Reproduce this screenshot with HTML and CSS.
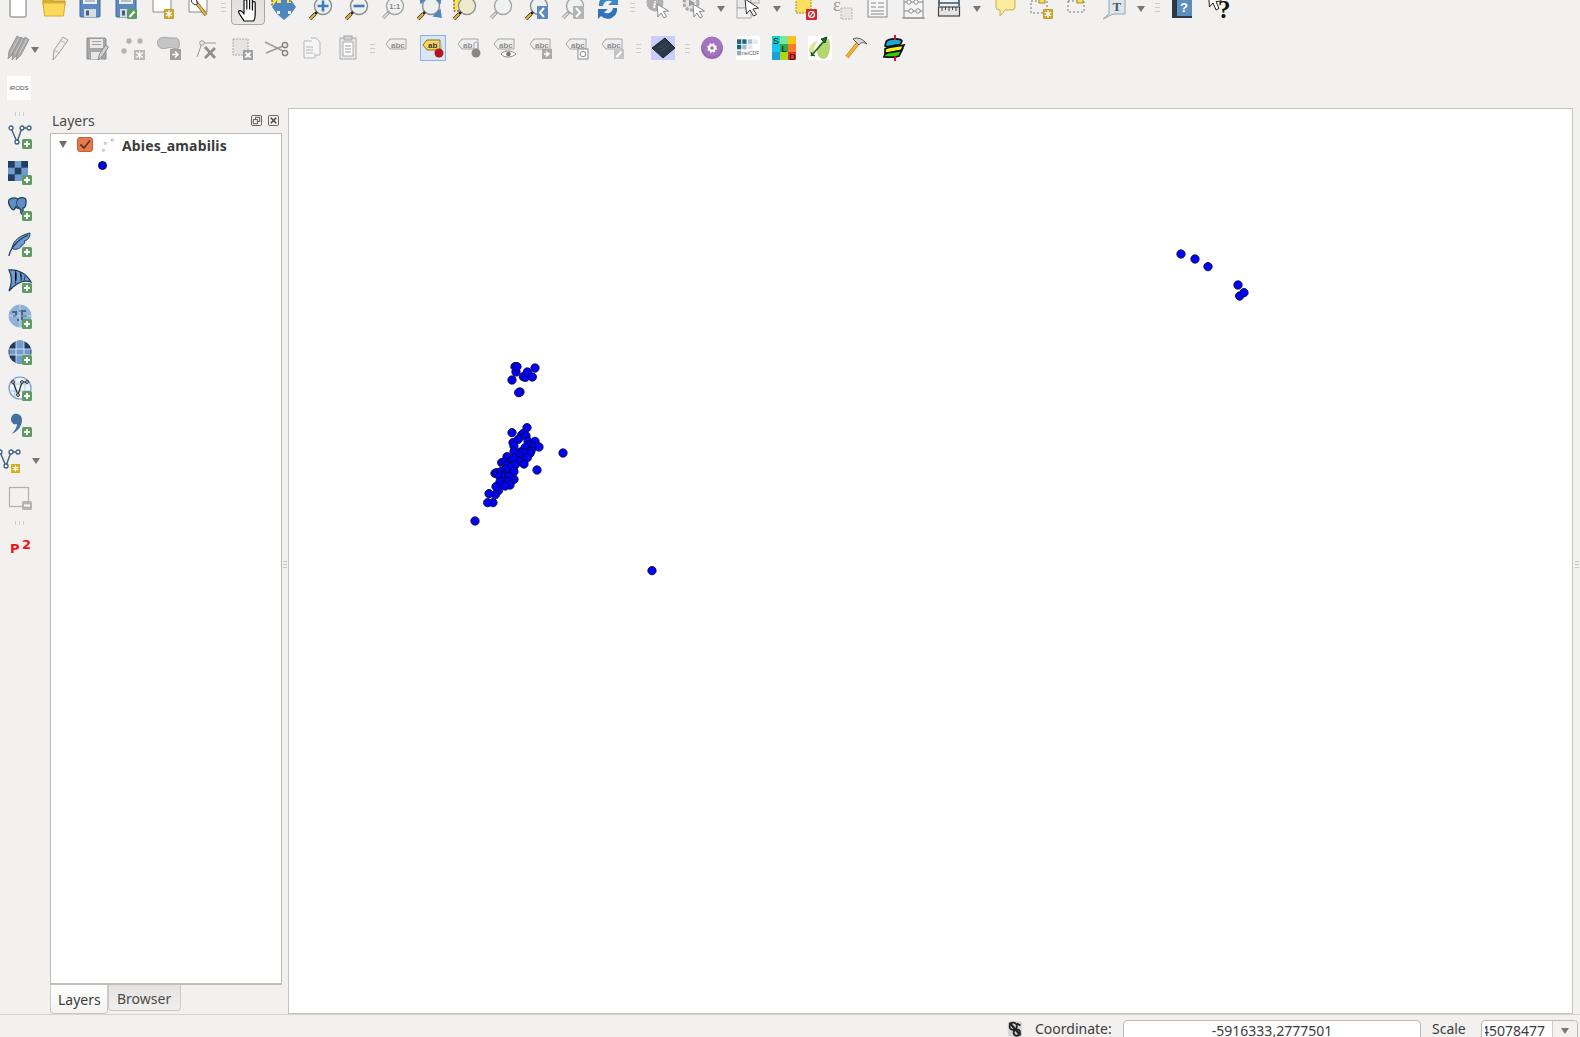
FILE: index.html
```html
<!DOCTYPE html>
<html lang="en">
<head>
<meta charset="utf-8">
<title>QGIS</title>
<link rel="stylesheet" href="styles.css">
</head>
<body>
<svg class="defs" aria-hidden="true">
  <defs>
    <g id="mag"><circle cx="15" cy="11" r="8.500" fill="#eef0f0" stroke="#8b8f8f" stroke-width="1.400"/><path d="M9 17l-2 2" stroke="#222" stroke-width="2.600"/><path d="M7 19l-5 5" stroke="#333" stroke-width="3.600"/><path d="M7 19l-5 5" stroke="#f3b32a" stroke-width="2.200"/></g>
    <g id="magg"><circle cx="15" cy="11" r="8.500" fill="#f0f1f1" stroke="#a5a8a8" stroke-width="1.400"/><path d="M9 17l-6 6" stroke="#a0a0a0" stroke-width="3.200"/><path d="M8 18l-5 5" stroke="#e3e3e3" stroke-width="1.400"/></g>
    <g id="floppy"><path d="M2 1h18l2 2v18a1 1 0 0 1-1 1H3a1 1 0 0 1-1-1z" fill="#5a8abf" stroke="#40699a"/><rect x="5" y="-4" width="14" height="13" fill="#eef1f4"/><path d="M7 0h10M7 3h10M7 6h10" stroke="#7d8b99"/><rect x="6" y="14" width="12" height="8" fill="#d8dde2"/><rect x="8" y="15.500" width="3" height="5" fill="#44607f"/></g>
    <g id="floppyg"><path d="M3 2h18l1 1v20H3z" fill="#a6a6a6" stroke="#8e8e8e"/><rect x="6" y="3" width="13" height="9" fill="#e8e8e8"/><path d="M8 5.500h9M8 8.500h9" stroke="#a0a0a0"/><rect x="7" y="16" width="10" height="7" fill="#e6e6e6"/></g>
    <g id="plus"><rect x="14" y="14" width="10" height="10" rx="1.500" fill="#5f9c5f"/><path d="M19 16v6M16 19h6" stroke="#fff" stroke-width="2"/></g>
    <g id="page"><path d="M3-8h13l5 5v20H3z" fill="#fff" stroke="#8a8a8a"/></g>
    <g id="gold"><rect x="14" y="14" width="10" height="10" rx="1" fill="#c9a227"/><path d="M19 15.500v7M15.800 17l6.400 4M22.200 17l-6.400 4" stroke="#fff" stroke-width="1.400"/></g>
    <g id="abc"><path d="M5 3h16v10H5L1 8z" fill="#efefef" stroke="#a4a4a4"/><text x="6" y="11.500" class="t-abc">abc</text></g>
    <g id="badge-arrow"><rect x="13" y="13" width="10" height="10" fill="#a9a9a9"/><path d="M15 18h4M17 15.500l3 2.500-3 2.500" stroke="#fff" stroke-width="1.500" fill="none"/></g>
    <g id="globe"><circle cx="12" cy="11" r="11" fill="#8fb2d8" stroke="#8ab0db"/></g>
    <g id="cursor"><path d="M12 9l1 13 3-4 3 5 2.500-1.500-3-5 5-.5z" fill="#fff" stroke="#888"/></g>
    <g id="pen3"><path d="M2 23l1-8L11 0l4 2.500L7 18z" fill="#a8a8a8" stroke="#8f8f8f" stroke-width=".8"/></g>
  </defs>
</svg>

<div class="app">
  <header class="toolbars">
    <div class="tb tb-first">
      <span class="b"><svg class="i" viewBox="0 0 24 24"><path d="M4-6h11l5 5v22a1 1 0 0 1-1 1H5a1 1 0 0 1-1-1z" fill="#fff" stroke="#777"/><path d="M15-6v5h5" fill="#ddd" stroke="#777"/></svg></span>
      <span class="b"><svg class="i" viewBox="0 0 24 24"><path d="M1 3h8l2 3h12v4H1z" fill="#d9af2f" stroke="#c29a22"/><path d="M1 8h22l-1.500 13H2.500z" fill="#fcd95a" stroke="#d5ae33"/></svg></span>
      <span class="b"><svg class="i" viewBox="0 0 24 24"><use href="#floppy"/></svg></span>
      <span class="b"><svg class="i" viewBox="0 0 24 24"><use href="#floppy"/><rect x="13" y="14" width="10" height="10" rx="1" fill="#5f9c5f"/><path d="M15.500 22l5-5.500" stroke="#fff" stroke-width="2"/></svg></span>
      <span class="b"><svg class="i" viewBox="0 0 24 24"><use href="#page"/><use href="#gold"/></svg></span>
      <span class="b"><svg class="i" viewBox="0 0 24 24"><use href="#page"/><path d="M9 6l11 14" stroke="#444" stroke-width="3.400"/><path d="M11 8.500l9 11.500" stroke="#eeb92f" stroke-width="2.200"/><path d="M5.500 5a4 4 0 0 0 6 4l-1-4-2-2z" fill="#fff" stroke="#333"/></svg></span>
      <span class="sep"></span>
      <span class="b b-on"><svg class="i" viewBox="0 -5 24 24"><path d="M8 21C6 17 2 13 2.500 11.500 3.500 9.500 6 11 8 14V1a1.400 1.400 0 0 1 2.800 0v8-11a1.400 1.400 0 0 1 2.800 0V9-1a1.400 1.400 0 0 1 2.800 0v11-7a1.400 1.400 0 0 1 2.800 0v12c0 3-.5 4-1.500 6z" fill="#fff" stroke="#111" stroke-width="1.200" stroke-linejoin="round"/></svg></span>
      <span class="b"><svg class="i" viewBox="0 0 24 24"><rect x="0" y="-5" width="18" height="16" fill="#ffe34d" stroke="#333" stroke-dasharray="2 1.500"/><path d="M12 8h-7v-3l-5 7 5 7v-3h14v3l5-7-5-7v3zM12 18v-14" fill="#4f86bf"/><path d="M8 16h8v3h3l-7 6-7-6h3zM9 8V4H6l6-7 6 7h-3v4z" fill="#4f86bf"/></svg></span>
      <span class="b"><svg class="i" viewBox="0 0 24 24"><use href="#mag"/><path d="M15 5.500v11M9.500 11h11" stroke="#3f7db8" stroke-width="2.600"/></svg></span>
      <span class="b"><svg class="i" viewBox="0 0 24 24"><use href="#mag"/><path d="M9.500 11h11" stroke="#3f7db8" stroke-width="2.600"/></svg></span>
      <span class="b"><svg class="i" viewBox="0 0 24 24"><use href="#magg"/><text x="9.300" y="14" class="t-11">1:1</text></svg></span>
      <span class="b"><svg class="i" viewBox="0 0 24 24"><use href="#mag"/><path d="M4 1l7 1-6 6zM25 1l-7 1 6 6zM25 22l-7-1 6-6zM10 2l-5 5M19 2l5 5M19 21l5-5" fill="#4f86bf" stroke="#4f86bf" stroke-width="1.500"/></svg></span>
      <span class="b"><svg class="i" viewBox="0 0 24 24"><path d="M2-5h13v21H2z" fill="#ffe34d" stroke="#333" stroke-dasharray="2 1.500"/><use href="#mag"/><circle cx="15" cy="11" r="7.500" fill="#ece9cc"/></svg></span>
      <span class="b"><svg class="i" viewBox="0 0 24 24"><use href="#magg"/></svg></span>
      <span class="b"><svg class="i" viewBox="0 0 24 24"><use href="#mag"/><rect x="13" y="11" width="11" height="13" fill="#5a8abf"/><path d="M20 13l-4 4.500 4 4.500" stroke="#fff" stroke-width="2" fill="none"/></svg></span>
      <span class="b"><svg class="i" viewBox="0 0 24 24"><use href="#magg"/><rect x="13" y="11" width="11" height="13" fill="#b4b4b4"/><path d="M16 13l4 4.500-4 4.500" stroke="#fff" stroke-width="2" fill="none"/></svg></span>
      <span class="b"><svg class="i" viewBox="0 0 24 24"><path d="M3 11A9.500 9.500 0 0 1 19 3l3-3v10h-10l4-3.500A6 6 0 0 0 7 11z" fill="#3f86c8"/><path d="M21 13A9.500 9.500 0 0 1 5 21l-3 3V14h10l-4 3.500A6 6 0 0 0 17 13z" fill="#2f74b8"/></svg></span>
      <span class="sep sep-n"></span>
      <span class="b"><svg class="i" viewBox="0 0 24 24"><circle cx="10" cy="8" r="8.500" fill="#b0b0b0"/><text x="8" y="13" class="t-info">i</text><use href="#cursor"/></svg></span>
      <span class="b"><svg class="i" viewBox="0 0 24 24"><circle cx="10" cy="8" r="7" fill="#e6e6e6" stroke="#a8a8a8" stroke-width="3" stroke-dasharray="3 1.500"/><path d="M8 4.500l6 3.500-6 3.500z" fill="#9a9a9a"/><use href="#cursor"/></svg></span>
      <span class="dd"></span>
      <span class="b"><svg class="i" viewBox="0 0 24 24"><rect x="0" y="-4" width="14" height="17" fill="#e8e8e8" stroke="#aaa"/><rect x="14" y="-4" width="8" height="12" fill="#e8e8e8" stroke="#aaa"/><rect x="0" y="13" width="14" height="10" fill="#f0f0f0" stroke="#aaa"/><path d="M8 4l1.500 15 3.500-4 3.500 6 3-1.500-3.500-5.500 5.500-1z" fill="#fff" stroke="#333"/></svg></span>
      <span class="dd"></span>
      <span class="b"><svg class="i" viewBox="0 0 24 24"><rect x="3" y="-5" width="15" height="23" fill="#fae05e" stroke="#a58a2c" stroke-dasharray="2 1"/><rect x="13" y="14" width="11" height="11" rx="1" fill="#d5232f"/><circle cx="18.500" cy="19.500" r="3" fill="none" stroke="#fff" stroke-width="1.200"/><path d="M16.500 22l4-5" stroke="#fff" stroke-width="1.200"/></svg></span>
      <span class="b"><svg class="i" viewBox="0 0 24 24"><text x="4" y="16" class="t-eps">ε</text><rect x="12" y="13" width="11" height="11" fill="#e6e6e6" stroke="#b5b5b5" stroke-dasharray="2 1"/></svg></span>
      <span class="b"><svg class="i" viewBox="0 0 24 24"><rect x="3" y="-4" width="19" height="26" fill="#f5f5f5" stroke="#8a8a8a"/><rect x="3" y="-4" width="19" height="8" fill="#8e8e8e"/><path d="M6 8h5M13 8h6M6 12h5M13 12h6M6 16h13M6 19h13" stroke="#8a8a8a" stroke-width="1.200"/></svg></span>
      <span class="b"><svg class="i" viewBox="0 0 24 24"><rect x="3" y="-4" width="19" height="27" fill="#f5f5f5" stroke="#8a8a8a"/><path d="M3 7h19M3 16h19M1 23h23" stroke="#8a8a8a" stroke-width="1.200"/><circle cx="8" cy="7" r="2.200" fill="#fff" stroke="#888"/><circle cx="15" cy="7" r="2.200" fill="#fff" stroke="#888"/><circle cx="10" cy="16" r="2.200" fill="#fff" stroke="#888"/><circle cx="17" cy="16" r="2.200" fill="#fff" stroke="#888"/></svg></span>
      <span class="b"><svg class="i" viewBox="0 0 24 24"><path d="M2 8h20M2 5v6M22 5v6" stroke="#34566f" stroke-width="1.600"/><rect x="1.500" y="12" width="21" height="9" fill="#e4e4e4" stroke="#444" stroke-width="1.200"/><path d="M5 12v4M8.500 12v3M12 12v4M15.500 12v3M19 12v4" stroke="#444"/></svg></span>
      <span class="dd"></span>
      <span class="b"><svg class="i" viewBox="0 0 24 24"><path d="M5-4h15a2 2 0 0 1 2 2v14a3 3 0 0 1-3 3H12l-5 6v-6H6a3 3 0 0 1-3-3V-2a2 2 0 0 1 2-2z" fill="#fbeb9d" stroke="#c9b03f"/></svg></span>
      <span class="b"><svg class="i" viewBox="0 0 24 24"><rect x="2" y="6" width="16" height="12" fill="none" stroke="#777" stroke-dasharray="2 2"/><rect x="10" y="3" width="6" height="5" fill="#fadf4c" stroke="#a58a2c"/><use href="#gold"/></svg></span>
      <span class="b"><svg class="i" viewBox="0 0 24 24"><rect x="3" y="6" width="16" height="11" fill="none" stroke="#777" stroke-dasharray="2 2"/><rect x="12" y="3" width="6" height="5" fill="#fadf4c" stroke="#a58a2c"/></svg></span>
      <span class="b"><svg class="i" viewBox="0 0 24 24"><path d="M8-4h16v23H12l-10 5 6-5z" fill="#dde7f0" stroke="#9aa3ab"/><text x="11.500" y="16" class="t-serif">T</text></svg></span>
      <span class="dd"></span>
      <span class="sep sep-n"></span>
      <span class="b"><svg class="i" viewBox="0 0 24 24"><rect x="2" y="-6" width="20" height="29" rx="1" fill="#5f8dbe"/><rect x="2" y="-6" width="5" height="29" fill="#2c3845"/><rect x="2" y="21" width="20" height="2" fill="#2c3845"/><text x="10" y="17" class="t-q">?</text></svg></span>
      <span class="b"><svg class="i" viewBox="0 0 24 24"><path d="M2-6l1.500 18 3.500-4 3 7 3-1.500-3-7 5.500-.5z" fill="#fff" stroke="#222"/><text x="12" y="23" class="t-what">?</text></svg></span>
    </div>

    <div class="tb">
      <span class="b b-narrow"><svg class="i" viewBox="0 0 24 24"><use href="#pen3"/><use href="#pen3" x="4" y="1"/><use href="#pen3" x="8" y="1"/><path d="M5 17L13 2M9 18l8-15M13 18l8-15" stroke="#d5d5d5" stroke-width=".8"/></svg></span>
      <span class="dd dd-small"></span>
      <span class="b"><svg class="i" viewBox="0 0 24 24"><path d="M5 24l1-10L15 1l5 3-9 13z" fill="#ececec" stroke="#a0a0a0"/><path d="M6 14l5 3M12 4l5 3" stroke="#b5b5b5"/></svg></span>
      <span class="b"><svg class="i" viewBox="0 0 24 24"><use href="#floppyg"/><path d="M14 24l1.500-6 6-9 3 2-6 9z" fill="#d0d0d0" stroke="#8a8a8a"/></svg></span>
      <span class="b"><svg class="i" viewBox="0 0 24 24"><circle cx="9" cy="5" r="2.700" fill="#b4b4b4"/><circle cx="20" cy="5" r="2.700" fill="#b4b4b4"/><circle cx="4" cy="15" r="2.700" fill="#b4b4b4"/><rect x="14" y="14" width="11" height="10" fill="#b8b8b8"/><path d="M19.500 15.500v7M16 16.500l7 5M23 16.500l-7 5" stroke="#fff" stroke-width="1.300"/></svg></span>
      <span class="b"><svg class="i" viewBox="0 0 24 24"><path d="M3 3c3-3 9-1 12-1s7-1 8 3 0 9-3 8-6-2-9-1-8 1-9-3-.5-4 1-6z" fill="#c4c4c4" stroke="#a5a5a5"/><rect x="14" y="13" width="11" height="11" fill="#a0a0a0"/><path d="M16 18.500h5M19 15.500l3 3-3 3" stroke="#fff" stroke-width="1.600" fill="none"/></svg></span>
      <span class="b"><svg class="i" viewBox="0 0 24 24"><path d="M5 21L10 7h14" stroke="#999" fill="none"/><circle cx="10" cy="7" r="2.300" fill="#eee" stroke="#999"/><path d="M13 11l10 11M23 12L13 22" stroke="#8f8f8f" stroke-width="2.800"/></svg></span>
      <span class="b"><svg class="i" viewBox="0 0 24 24"><rect x="5" y="3" width="15" height="16" fill="#e4e4e4" stroke="#aaa" stroke-dasharray="2 1"/><rect x="15" y="14" width="10" height="10" fill="#a0a0a0"/><path d="M17.500 16.500l5 5M22.500 16.500l-5 5" stroke="#fff" stroke-width="1.800"/></svg></span>
      <span class="b"><svg class="i" viewBox="0 0 24 24"><path d="M1 6l18 9M2 17l17-7" stroke="#9e9e9e" stroke-width="1.500"/><circle cx="21" cy="9" r="2.600" fill="none" stroke="#888" stroke-width="1.500"/><circle cx="21" cy="17" r="2.600" fill="none" stroke="#888" stroke-width="1.500"/></svg></span>
      <span class="b"><svg class="i" viewBox="0 0 24 24"><path d="M4 5h8l3 3v14H4z" fill="#f5f5f5" stroke="#b5b5b5"/><path d="M11 2h5l4 4v13h-5" fill="#f5f5f5" stroke="#b5b5b5"/><path d="M6 11h7M6 14h7M6 17h7" stroke="#b5b5b5"/></svg></span>
      <span class="b"><svg class="i" viewBox="0 0 24 24"><rect x="4" y="2" width="16" height="21" fill="#e8e8e8" stroke="#aaa"/><rect x="8" y="0" width="8" height="4" fill="#d0d0d0" stroke="#aaa"/><rect x="7" y="6" width="10" height="14" fill="#fff" stroke="#aaa"/><path d="M9 10h6M9 13h6M9 16h6" stroke="#999"/></svg></span>
      <span class="sep sep-n"></span>
      <span class="b"><svg class="i" viewBox="0 0 24 24"><use href="#abc"/></svg></span>
      <span class="b b-sel"><svg class="i" viewBox="0 0 24 24"><path d="M6 4h13v10H6L2 9z" fill="#f7d75a" stroke="#8a7320"/><text x="7" y="12" class="t-ab">ab</text><path d="M16 8a2 2 0 0 1 4 0v5" fill="none" stroke="#bbb" stroke-width="1.200"/><circle cx="18" cy="17" r="4.500" fill="#b3161f"/></svg></span>
      <span class="b"><svg class="i" viewBox="0 0 24 24"><path d="M5 3h16v10H5L1 8z" fill="#efefef" stroke="#a4a4a4"/><text x="6" y="11.500" class="t-abc">ab</text><circle cx="19" cy="17" r="4.500" fill="#888"/><path d="M17 13V8a2 2 0 0 1 4 0v5" stroke="#aaa" fill="none"/></svg></span>
      <span class="b"><svg class="i" viewBox="0 0 24 24"><use href="#abc"/><path d="M8 18c3-4 11-4 15 0-4 4-12 4-15 0z" fill="#fff" stroke="#888"/><circle cx="15.500" cy="18" r="2.300" fill="#777"/></svg></span>
      <span class="b"><svg class="i" viewBox="0 0 24 24"><use href="#abc"/><use href="#badge-arrow"/></svg></span>
      <span class="b"><svg class="i" viewBox="0 0 24 24"><use href="#abc"/><rect x="13" y="13" width="10" height="10" fill="#fff" stroke="#888"/><circle cx="18" cy="18" r="2.800" fill="none" stroke="#888"/></svg></span>
      <span class="b"><svg class="i" viewBox="0 0 24 24"><use href="#abc"/><rect x="13" y="13" width="10" height="10" fill="#c4c4c4"/><path d="M15.500 21l5-5.500" stroke="#fff" stroke-width="2"/></svg></span>
      <span class="sep"></span>
      <span class="b"><svg class="i lav" viewBox="0 0 24 24"><path d="M1 12L14 2l10 10-12 10z" fill="#2b3845" stroke="#1e2833"/><path d="M8 12l6-4M10 15l6-4" stroke="#44566a" stroke-width=".8"/></svg></span>
      <span class="sep sep-n"></span>
      <span class="b"><svg class="i" viewBox="0 0 24 24"><circle cx="12" cy="12" r="11" fill="#9b63b3"/><circle cx="12" cy="10.500" r="10" fill="#a574be"/><circle cx="12" cy="12" r="3.800" fill="#fff" stroke="#fff" stroke-width="2" stroke-dasharray="1.800 1.200"/><circle cx="12" cy="12" r="1.700" fill="#9b63b3"/></svg></span>
      <span class="b"><svg class="i tile" viewBox="0 0 24 24"><rect x="1" y="3.300" width="4.300" height="4.600" fill="#2c5f80"/><rect x="6.300" y="3.300" width="4.300" height="4.600" fill="#0f6a8a"/><rect x="12" y="3.300" width="4.300" height="4.600" fill="#adbfcc"/><rect x="17.500" y="3.300" width="4.300" height="4.600" fill="#e5e8ea"/><rect x="1" y="8.700" width="4.300" height="4.600" fill="#0f6a8a"/><rect x="6.300" y="8.700" width="4.300" height="4.600" fill="#a7bac8"/><rect x="12" y="8.700" width="4.300" height="4.600" fill="#e0e5e9"/><rect x="1" y="14.700" width="4.300" height="4.600" fill="#93a8b8"/><text x="6" y="18.500" class="t-nc">netCDF</text></svg></span>
      <span class="b"><svg class="i" viewBox="0 0 24 24"><rect width="8" height="8" fill="#14d0d0"/><rect x="8" width="8" height="8" fill="#75e89a"/><rect x="16" width="8" height="8" fill="#ffc21a"/><rect y="8" width="8" height="8" fill="#18c4ef"/><rect x="8" y="8" width="8" height="8" fill="#32a848"/><rect x="16" y="8" width="8" height="8" fill="#fb7b27"/><rect y="16" width="8" height="8" fill="#1f9fd6"/><rect x="8" y="16" width="8" height="8" fill="#a9d61e"/><rect x="16" y="16" width="8" height="8" fill="#e5342d"/><text x="1" y="7.500" class="t-sld">S</text><text x="9.500" y="15.500" class="t-sld">L</text><text x="17" y="23.500" class="t-sld">D</text></svg></span>
      <span class="b"><svg class="i tile" viewBox="0 0 24 24"><path d="M1 14c0-5 5-9 9-9-3 4-5 9-3 15-3 1-6-2-6-6z" fill="#dde79a"/><path d="M9 15C9 9 14 4 21 3c2 8 1 18-5 20-4 0-7-3-7-8z" fill="#b5d66f"/><path d="M3 20L18 3" stroke="#1e6b2a" stroke-width="1.800"/><path d="M19 1l-6 2 4 4zM3 16l1 3 3 1" fill="#1e6b2a" stroke="#1e3b2a"/></svg></span>
      <span class="b"><svg class="i" viewBox="0 0 24 24"><path d="M3 21L14 7" stroke="#c98a1f" stroke-width="3.800"/><path d="M3 21L14 7" stroke="#f2b63c" stroke-width="2.200"/><path d="M9 3c4-2 9-1 14 5-4-2-6-2-8 1l-3-3z" fill="#d8d8d8" stroke="#555"/></svg></span>
      <span class="b"><svg class="i" viewBox="0 0 24 24"><path d="M15-1v26" stroke="#e0102a" stroke-width="1.800"/><path d="M6 6C8 2 21 2 22 5l-2 4C15 8 9 12 5 10z" fill="#19a9d9" stroke="#111" stroke-width="1.700"/><path d="M5 13c5-3 11-2 19-4l-3 6c-4-1-11 3-16 2z" fill="#f5f020" stroke="#111" stroke-width="1.700"/><path d="M5 18c5-3 11-1 17-4l-3 6c-4 2-11 1-15 1z" fill="#28d018" stroke="#111" stroke-width="1.700"/><path d="M15-1v5M15 20v5" stroke="#e0102a" stroke-width="1.800"/></svg></span>
    </div>

    <div class="tb tb-last">
      <span class="irods">iRODS</span>
    </div>
  </header>

  <main class="main">
    <nav class="lt">
      <span class="vgrip"></span>
      <span class="li"><svg class="i" viewBox="0 0 24 24"><path d="M3 3l6 14 5-14h7" fill="none" stroke="#3d6082" stroke-width="1.400"/><circle cx="3" cy="3" r="2" fill="#fff" stroke="#3d6082" stroke-width="1.300"/><circle cx="9" cy="17" r="2" fill="#fff" stroke="#3d6082" stroke-width="1.300"/><circle cx="14" cy="3" r="2" fill="#fff" stroke="#3d6082" stroke-width="1.300"/><circle cx="21" cy="3" r="2" fill="#fff" stroke="#3d6082" stroke-width="1.300"/><use href="#plus"/></svg></span>
      <span class="li"><svg class="i" viewBox="0 0 24 24"><rect width="20" height="20" fill="#6f9bcf"/><rect width="6.700" height="6.700" fill="#223f60"/><rect x="13.300" width="6.700" height="6.700" fill="#223f60"/><rect x="6.700" y="6.700" width="6.700" height="6.700" fill="#223f60"/><rect y="13.300" width="6.700" height="6.700" fill="#223f60"/><use href="#plus"/></svg></span>
      <span class="li"><svg class="i" viewBox="0 0 24 24"><path d="M1 3C4 0 8 1 10 2c3-2 9-2 8 3 0 3-1 6-3 6v5c-1 2-3 1-2-3l-2-2c-2 1-3-1-3-2-1 4-3 5-5 2S0 5 1 3z" fill="#5f8fc4" stroke="#223f60" stroke-width="1.300"/><path d="M10 2c-2 3-2 6 1 9" stroke="#223f60" fill="none"/><use href="#plus"/></svg></span>
      <span class="li"><svg class="i" viewBox="0 0 24 24"><path d="M4 15C5 8 12 2 22 0c0 6-4 8-6 8 2 1 0 4-2 4-1 3-5 5-9 4z" fill="#6f9bcf" stroke="#223f60"/><path d="M1 23c1-7 8-16 19-21" stroke="#223f60" fill="none" stroke-width="1.300"/><use href="#plus"/></svg></span>
      <span class="li"><svg class="i" viewBox="0 0 24 24"><path d="M1 1c8-1 17 3 22 12-6-2-14 0-22 9 3-7 3-15 0-21z" fill="#6f9bcf" stroke="#223f60" stroke-width="1.300"/><path d="M7 1c2 4 2 8 0 14M12 3c2 3 2 6 1 9M17 7l-1 5" stroke="#223f60"/><use href="#plus"/></svg></span>
      <span class="li"><svg class="i" viewBox="0 0 24 24"><use href="#globe"/><path d="M4 7h5M11 6h7M5 11h3M12 11h7M9 15h2M15 15h3M8 8v3M14 7v8" stroke="#344f6e" stroke-width="1.500"/><path d="M1 11h22M12 0v22" stroke="#dce8f4" stroke-width=".7"/><use href="#plus"/></svg></span>
      <span class="li"><svg class="i" viewBox="0 0 24 24"><circle cx="12" cy="11" r="11.500" fill="#1e3d62"/><path d="M1.500 8h21v6h-21zM8 0h8v22H8z" fill="#6f9bcf"/><path d="M1 8h22M1 14h22M8 0v22M16 0v22" stroke="#e8eef5" stroke-width=".8"/><use href="#plus"/></svg></span>
      <span class="li"><svg class="i" viewBox="0 0 24 24"><circle cx="12" cy="11" r="11" fill="#eef3f9" stroke="#6f9bcf" stroke-width="1.200"/><path d="M1 7h22M1 14h22M7 1v20M17 1v20" stroke="#a5c2e0" stroke-width=".9"/><path d="M5 5l5 13 4-13h5" fill="none" stroke="#222" stroke-width="1.200"/><circle cx="5" cy="5" r="1.400" fill="#fff" stroke="#222"/><circle cx="10" cy="18" r="1.400" fill="#fff" stroke="#222"/><circle cx="14" cy="5" r="1.400" fill="#fff" stroke="#222"/><circle cx="19" cy="5" r="1.400" fill="#fff" stroke="#222"/><use href="#plus"/></svg></span>
      <span class="li"><svg class="i" viewBox="0 0 24 24"><path d="M6 1c4-1 8 1 8 6 0 6-4 11-10 14 2-3 5-6 5-10-3 1-6-1-6-5 0-2 1-4 3-5z" fill="#44709f"/><use href="#plus"/></svg></span>
      <span class="li li-new"><svg class="i" viewBox="0 0 24 24"><path d="M2 3l6 14 5-14h7" fill="none" stroke="#3d6082" stroke-width="1.400"/><circle cx="2" cy="3" r="2" fill="#fff" stroke="#3d6082" stroke-width="1.300"/><circle cx="8" cy="17" r="2" fill="#fff" stroke="#3d6082" stroke-width="1.300"/><circle cx="13" cy="3" r="2" fill="#fff" stroke="#3d6082" stroke-width="1.300"/><circle cx="20" cy="3" r="2" fill="#fff" stroke="#3d6082" stroke-width="1.300"/><rect x="13" y="15" width="9" height="9" fill="#d3ab1f"/><path d="M17.500 16.500v6M14.500 18l6 3M20.500 18l-6 3" stroke="#fff" stroke-width="1.200"/></svg><span class="dd dd-left"></span></span>
      <span class="li"><svg class="i" viewBox="0 0 24 24"><rect x="1.500" y="2.500" width="19" height="19" fill="none" stroke="#b0b0b0" stroke-width="1.200"/><rect x="14" y="16" width="10" height="9" rx="1.500" fill="#b4b4b4"/><path d="M16 20.500h6" stroke="#fff" stroke-width="2"/></svg></span>
      <span class="vgrip"></span>
      <span class="li"><svg class="i" viewBox="0 0 24 24"><text x="2" y="19" class="t-p">P</text><text x="14" y="14.500" class="t-p">2</text></svg></span>
    </nav>

    <aside class="dock">
      <div class="dock-title">
        <span class="dock-name">Layers</span>
        <span class="dock-btns">
          <svg class="dbtn" viewBox="0 0 12 12"><rect x=".5" y=".5" width="11" height="11" rx="1.500" fill="none" stroke="#555"/><rect x="5" y="2.500" width="4.500" height="4.500" fill="none" stroke="#555"/><rect x="2.500" y="5" width="4.500" height="4.500" fill="#f2f1f0" stroke="#555"/></svg>
          <svg class="dbtn" viewBox="0 0 12 12"><rect x=".5" y=".5" width="11" height="11" rx="1.500" fill="none" stroke="#555"/><path d="M3 3l6 6M9 3l-6 6" stroke="#444" stroke-width="1.600"/></svg>
        </span>
      </div>
      <div class="tree">
        <div class="tree-row">
          <span class="tw"></span>
          <svg class="check" viewBox="0 0 16 16"><rect x=".5" y=".5" width="15" height="14" rx="2.500" fill="#e9794a" stroke="#bb6238"/><path d="M3.500 7.500l3.500 3.500 6-7.500" fill="none" stroke="#5a3a2a" stroke-width="1.800"/></svg>
          <svg class="pts-icon" viewBox="0 0 14 14"><circle cx="3.300" cy="5.300" r="1.100" fill="#fff" stroke="#888" stroke-width=".6"/><circle cx="10.300" cy="2" r="1.100" fill="#fff" stroke="#888" stroke-width=".6"/><circle cx="1.300" cy="12.300" r="1.100" fill="#fff" stroke="#888" stroke-width=".6"/></svg>
          <span class="layer-name">Abies_amabilis</span>
        </div>
        <div class="legend"><span class="dot"></span></div>
      </div>
      <div class="tabs">
        <span class="tab tab-on">Layers</span>
        <span class="tab tab-off">Browser</span>
      </div>
    </aside>

    <div class="splitter"><span class="sgrip"></span></div>

    <section class="canvas">
      <svg class="map" viewBox="288 108 1285 906">
        <g class="pts" transform="translate(440 350) scale(.33333)">
          <circle cx="225" cy="50"/><circle cx="228" cy="66"/><circle cx="231" cy="50"/><circle cx="285" cy="54"/><circle cx="250" cy="80"/><circle cx="256" cy="82"/><circle cx="262" cy="66"/><circle cx="277" cy="81"/><circle cx="216" cy="90"/><circle cx="240" cy="126"/><circle cx="236" cy="128"/>
          <circle cx="261" cy="233"/><circle cx="216" cy="248"/><circle cx="245" cy="255"/><circle cx="250" cy="250"/><circle cx="258" cy="258"/><circle cx="235" cy="268"/><circle cx="219" cy="278"/><circle cx="264" cy="274"/><circle cx="285" cy="274"/><circle cx="268" cy="285"/><circle cx="280" cy="290"/><circle cx="222" cy="288"/><circle cx="297" cy="291"/><circle cx="255" cy="293"/><circle cx="242" cy="306"/><circle cx="273" cy="303"/><circle cx="222" cy="305"/><circle cx="270" cy="310"/><circle cx="250" cy="308"/><circle cx="201" cy="320"/><circle cx="237" cy="318"/><circle cx="262" cy="323"/><circle cx="213" cy="335"/><circle cx="232" cy="332"/><circle cx="185" cy="338"/><circle cx="192" cy="336"/><circle cx="222" cy="325"/><circle cx="240" cy="335"/><circle cx="225" cy="345"/><circle cx="252" cy="342"/><circle cx="200" cy="345"/><circle cx="210" cy="352"/><circle cx="197" cy="358"/><circle cx="165" cy="370"/><circle cx="170" cy="368"/><circle cx="183" cy="365"/><circle cx="187" cy="375"/><circle cx="215" cy="375"/><circle cx="222" cy="365"/><circle cx="178" cy="378"/><circle cx="195" cy="380"/><circle cx="222" cy="388"/><circle cx="207" cy="380"/><circle cx="190" cy="395"/><circle cx="180" cy="396"/><circle cx="205" cy="393"/><circle cx="210" cy="405"/><circle cx="175" cy="422"/><circle cx="168" cy="410"/><circle cx="195" cy="408"/><circle cx="166" cy="434"/><circle cx="147" cy="431"/><circle cx="159" cy="458"/><circle cx="143" cy="458"/>
          <circle cx="369" cy="309"/><circle cx="291" cy="360"/><circle cx="105" cy="513"/><circle cx="636" cy="662"/>
        </g>
        <g class="pts" transform="translate(1150 230) scale(.33333)">
          <circle cx="93" cy="72"/><circle cx="135" cy="87"/><circle cx="174" cy="110"/><circle cx="264" cy="165"/><circle cx="269" cy="198"/><circle cx="282" cy="188"/>
        </g>
      </svg>
    </section>

    <div class="splitter splitter-r"><span class="sgrip"></span></div>
  </main>

  <footer class="status">
    <svg class="st-icon" viewBox="0 0 18 20"><rect x="1" y="1" width="16" height="18" rx="3" fill="#d8d8d8"/><path d="M3 3l12 14" stroke="#222" stroke-width="2.500"/><circle cx="7" cy="7" r="4" fill="none" stroke="#222" stroke-width="2"/><circle cx="11" cy="14" r="3.500" fill="none" stroke="#222" stroke-width="2"/><path d="M11 4l4 2" stroke="#222" stroke-width="2"/></svg>
    <span class="st-label">Coordinate:</span>
    <span class="st-input">-5916333,2777501</span>
    <span class="st-scale">Scale</span>
    <span class="st-combo"><span class="st-value"><span>1:45078477</span></span><span class="st-arrow"></span></span>
  </footer>
</div>
</body>
</html>
```

FILE: styles.css
```css
html, body { margin: 0; padding: 0; height: 100%; overflow: hidden; }
body { background: #f2f1f0; font-family: "Noto Sans", "Open Sans", sans-serif; color: #3c3c3c; }

.defs { position: absolute; width: 0; height: 0; }

.app { display: flex; flex-direction: column; height: 1037px; overflow: hidden; }

/* toolbars */
.toolbars { display: flex; flex-direction: column; gap: 5px; flex: none; height: 105px; }
.tb { display: flex; height: 36px; flex: none; }
.tb-first { margin-top: -11px; }
.tb-last { height: 34px; align-items: center; padding-left: 7px; }

.b { width: 36px; height: 36px; flex: none; display: flex; align-items: center; justify-content: center; box-sizing: border-box; }
.b-narrow { width: 30px; justify-content: flex-end; }
.b-on { border: 1px solid #a9a7a3; border-radius: 4px; background: linear-gradient(#dfdedc, #e9e8e6); margin: 0 1px 0 1px; width: 34px; }
.b-sel svg { background: #dbe6f3; outline: 1px solid #8cb2e6; }

.i { width: 24px; height: 24px; display: block; overflow: visible; flex: none; }
.lav { background: #ccccff; overflow: hidden; }
.tile { background: #fff; }

.sep { width: 14px; flex: none; display: flex; align-items: center; justify-content: center; }
.sep-n { width: 13px; }
.sep::before { content: ""; width: 5px; height: 9px; background: repeating-linear-gradient(#cfcdc9 0 1px, transparent 1px 4px); }

.dd { width: 20px; flex: none; display: flex; align-items: center; justify-content: center; }
.dd::before { content: ""; margin-top: 4px; border-top: 6px solid #777; border-left: 4px solid transparent; border-right: 4px solid transparent; }
.dd-small { width: 12px; justify-content: flex-start; padding-left: 1px; box-sizing: border-box; }
.dd-small::before { margin-top: 3px; }

.irods { width: 24px; height: 24px; background: #fff; display: flex; align-items: center; justify-content: center; font: 6px "Liberation Sans", sans-serif; color: #3f4a4a; letter-spacing: .1px; }

/* svg label fonts */
.t-abc { font: 700 8px "Liberation Sans", sans-serif; fill: #8c8c8c; }
.t-ab { font: 700 8px "Liberation Sans", sans-serif; fill: #333; }
.t-11 { font: 700 7.500px "Liberation Sans", sans-serif; fill: #888; }
.t-info { font: italic 700 11px "Liberation Serif", serif; fill: #fff; }
.t-eps { font: 18px "Liberation Serif", serif; fill: #999; }
.t-serif { font: 700 13px "Liberation Serif", serif; fill: #4a5a66; }
.t-q { font: 700 13px "Liberation Sans", sans-serif; fill: #fff; }
.t-what { font: 700 25px "Liberation Serif", serif; fill: #111; }
.t-nc { font: 5px "Liberation Sans", sans-serif; fill: #555; }
.t-sld { font: 9px "Liberation Sans", sans-serif; fill: #111; }
.t-p { font: 700 13px "DejaVu Sans", sans-serif; fill: #f01414; }

/* main area */
.main { flex: 1; display: flex; min-height: 0; padding-top: 3px; }

.lt { width: 50px; flex: none; display: flex; flex-direction: column; padding: 4px 0 0 8px; box-sizing: border-box; }
.li { height: 24px; margin-bottom: 12px; display: flex; flex: none; }
.li-new { margin-left: -10px; }
.li-new .dd { width: 20px; margin-left: 4px; }
.li-new .dd::before { margin-top: 0; }
.vgrip { width: 10px; height: 4px; margin: 0 0 9px 7px; flex: none; background: repeating-linear-gradient(90deg, #cfcdc9 0 1px, transparent 1px 4px); }

.dock { width: 232px; flex: none; display: flex; flex-direction: column; }
.dock-title { height: 25px; flex: none; display: flex; align-items: center; justify-content: space-between; padding: 0 3px 0 2px; }
.dock-name { font-size: 14px; color: #4a4a4a; }
.dock-btns { display: flex; gap: 6px; }
.dbtn { width: 11px; height: 11px; display: block; }

.tree { flex: 1; background: #fff; border: 1px solid #c0bdb8; border-bottom: 2px solid #c0bdb8; }
.tree-row { display: flex; align-items: center; height: 22px; padding-left: 8px; }
.tw { width: 0; height: 0; border-top: 7px solid #6e6e6e; border-left: 4px solid transparent; border-right: 4px solid transparent; margin: -2px 10px 0 0; }
.check { width: 16px; height: 16px; margin-right: 9px; }
.pts-icon { width: 14px; height: 14px; margin-right: 6px; }
.layer-name { font-size: 14px; font-weight: 700; color: #3c3c3c; letter-spacing: .15px; }
.legend { padding: 5px 0 0 46.500px; }
.dot { display: block; width: 9px; height: 9px; box-sizing: border-box; border-radius: 50%; background: #0000ff; border: 1px solid #111; }

.tabs { height: 29px; flex: none; display: flex; }
.tab { height: 26px; box-sizing: border-box; padding: 0 7px; display: flex; align-items: center; font-size: 14px; color: #4c4c4c; border: 1px solid #cbc9c5; border-top: 0; border-radius: 0 0 4px 4px; background: linear-gradient(#e4e3e1, #f0efee); }
.tab-off { width: 73px; padding: 1px 0 0 8px; }
.tab-on { height: 29px; width: 58px; background: linear-gradient(#fff, #f4f3f2); color: #3c3c3c; padding-top: 0; }

.splitter { width: 6px; flex: none; display: flex; align-items: center; justify-content: center; }
.splitter-r { width: 7px; }
.sgrip { width: 4px; height: 7px; margin-top: 6px; background: repeating-linear-gradient(#c8c6c2 0 1px, transparent 1px 3px); }

.canvas { flex: 1; min-width: 0; background: #fff; border: 1px solid #c6c3be; box-sizing: border-box; }
.map { display: block; width: 1285px; height: 906px; margin: -1px; }
.pts circle { r: 12.500px; fill: #0000ff; stroke: #0a0a28; stroke-width: 2.600px; }

/* status bar */
.status { height: 23px; flex: none; box-sizing: border-box; border-top: 1px solid #d6d4d0; display: flex; align-items: flex-start; justify-content: flex-end; padding: 5px 2px 0 0; font-size: 14px; color: #3c3c3c; overflow: hidden; }
.st-icon { width: 18px; height: 18px; margin-right: 11px; flex: none; }
.st-label { margin: -1px 10px 0 0; width: 78px; flex: none; white-space: nowrap; }
.st-input { width: 298px; height: 28px; flex: none; box-sizing: border-box; background: #fff; border: 1px solid #bdbab5; border-radius: 4px; text-align: center; margin-right: 11px; }
.st-scale { width: 49px; flex: none; margin-top: -1px; }
.st-combo { width: 97px; height: 28px; flex: none; box-sizing: border-box; display: flex; background: #fff; border: 1px solid #bdbab5; border-radius: 4px; }
.st-value { flex: 1; min-width: 0; display: flex; justify-content: flex-end; overflow: hidden; padding-right: 7px; margin-left: 3px; white-space: nowrap; }
.st-value span { flex: none; }
.st-arrow { width: 24px; flex: none; border-left: 1px solid #cfcdc9; display: flex; justify-content: center; background: #f2f1f0; border-radius: 0 4px 4px 0; }
.st-arrow::before { content: ""; margin-top: 7px; border-top: 6px solid #777; border-left: 4px solid transparent; border-right: 4px solid transparent; height: 0; }
```
